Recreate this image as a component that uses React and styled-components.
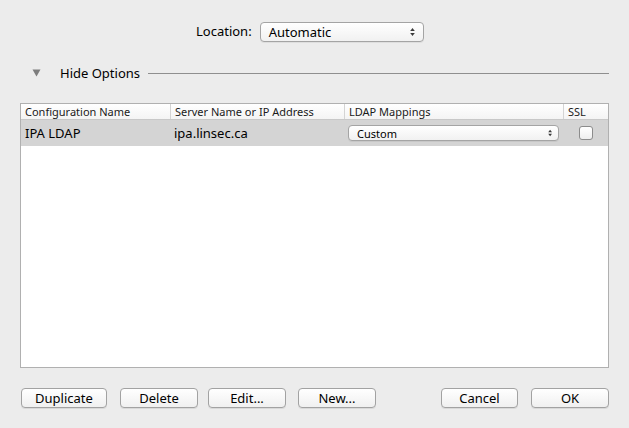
import React from "react";
import styled, { createGlobalStyle } from "styled-components";

const Global = createGlobalStyle`
  html, body { margin: 0; padding: 0; background: #ececec; }
  body { font-family: "Noto Sans", "DejaVu Sans", sans-serif; color: #000; }
`;

const Window = styled.div`
  width: 629px;
  height: 428px;
  background: #ececec;
  box-sizing: border-box;
  padding-top: 21px;
  display: flex;
  flex-direction: column;
`;

const LocationRow = styled.div`
  display: flex;
  align-items: center;
  padding-left: 196px;
  gap: 8px;
  height: 21px;
`;

const Label = styled.span`
  font-size: 13px;
  line-height: 16px;
  margin-top: -2px;
`;

const Popup = styled.div`
  position: relative;
  box-sizing: border-box;
  width: ${p => p.$w}px;
  height: ${p => p.$h}px;
  border: 1px solid #a4a4a4;
  border-radius: 4px;
  background: linear-gradient(#ffffff, #f1f1f1);
  box-shadow: 0 1px 0 rgba(0,0,0,0.06);
  display: flex;
  align-items: center;
  padding-left: ${p => p.$pad}px;
  font-size: ${p => p.$fs}px;
`;

const Arrows = styled.svg`
  position: absolute;
  right: ${p => p.$r}px;
  top: 50%;
  transform: translateY(-50%);
`;

const Disclosure = styled.div`
  display: flex;
  align-items: center;
  margin-top: 21px;
  padding-left: 32px;
  padding-right: 20px;
  height: 20px;
`;

const Tri = styled.svg`
  margin-right: 19px;
`;

const DiscText = styled.span`
  font-size: 13px;
  margin-right: 8px;
`;

const Rule = styled.div`
  flex: 1;
  height: 1px;
  background: #8f8f8f;
`;

const Table = styled.div`
  margin: 20px 20px 0 20px;
  height: 265px;
  box-sizing: border-box;
  border: 1px solid #b0b0b0;
  background: #fff;
  display: flex;
  flex-direction: column;
`;

const cols = "149px 174px 219px 1fr";

const HeaderRow = styled.div`
  display: grid;
  grid-template-columns: ${cols};
  height: 15px;
  border-bottom: 1px solid #c8c8c8;
  background: linear-gradient(#ffffff, #f4f4f4);
`;

const HeadCell = styled.div`
  font-size: 11px;
  line-height: 15px;
  padding-left: 4px;
  color: #1a1a1a;
  border-left: ${p => (p.$first ? "none" : "1px solid #d4d4d4")};
  white-space: nowrap;
  overflow: hidden;
`;

const DataRow = styled.div`
  display: grid;
  grid-template-columns: ${cols};
  height: 26px;
  background: #d4d4d4;
  align-items: center;
`;

const Cell = styled.div`
  font-size: 13px;
  padding-left: ${p => p.$pad}px;
  display: flex;
  align-items: center;
`;

const Check = styled.div`
  width: 14px;
  height: 14px;
  box-sizing: border-box;
  border: 1px solid #8c8c8c;
  border-radius: 3px;
  background: linear-gradient(#ffffff, #eeeeee);
`;

const ButtonRow = styled.div`
  display: flex;
  padding: 0 20px;
  margin-top: 20px;
`;

const Btn = styled.button`
  box-sizing: border-box;
  width: ${p => p.$w}px;
  height: 20px;
  margin-left: ${p => p.$ml}px;
  border: 1px solid #a2a2a2;
  border-radius: 4px;
  background: linear-gradient(#ffffff, #f0f0f0);
  box-shadow: 0 1px 0 rgba(0,0,0,0.08);
  font-family: "Noto Sans", "DejaVu Sans", sans-serif;
  font-size: 13px;
  color: #000;
  padding: 0;
  display: flex;
  align-items: center;
  justify-content: center;
`;

const Spacer = styled.div`
  flex: 1;
`;

const UpDown = ({ r, size = 1 }) => (
  <Arrows $r={r} width={5 * size} height={9 * size} viewBox="0 0 5 9">
    <path d="M0.2 3.6 L2.5 0.6 L4.8 3.6 Z" fill="#3a3a3a" />
    <path d="M0.2 5.4 L2.5 8.4 L4.8 5.4 Z" fill="#3a3a3a" />
  </Arrows>
);

export default function App() {
  return (
    <>
      <Global />
      <Window>
        <LocationRow>
          <Label>Location:</Label>
          <Popup $w={164} $h={20} $pad={8} $fs={13}>
            Automatic
            <UpDown r={8} />
          </Popup>
        </LocationRow>

        <Disclosure>
          <Tri width="9" height="8" viewBox="0 0 9 8">
            <path d="M0.5 0.5 L8.5 0.5 L4.5 7.5 Z" fill="#7d7d7d" />
          </Tri>
          <DiscText>Hide Options</DiscText>
          <Rule />
        </Disclosure>

        <Table>
          <HeaderRow>
            <HeadCell $first>Configuration Name</HeadCell>
            <HeadCell>Server Name or IP Address</HeadCell>
            <HeadCell>LDAP Mappings</HeadCell>
            <HeadCell>SSL</HeadCell>
          </HeaderRow>
          <DataRow>
            <Cell $pad={4}>IPA LDAP</Cell>
            <Cell $pad={4}>ipa.linsec.ca</Cell>
            <Cell $pad={4}>
              <Popup $w={211} $h={16} $pad={8} $fs={11}>
                Custom
                <UpDown r={6} size={0.85} />
              </Popup>
            </Cell>
            <Cell $pad={16}>
              <Check />
            </Cell>
          </DataRow>
        </Table>

        <ButtonRow>
          <Btn $w={86} $ml={1}>Duplicate</Btn>
          <Btn $w={78} $ml={13}>Delete</Btn>
          <Btn $w={78} $ml={10}>Edit...</Btn>
          <Btn $w={78} $ml={12}>New...</Btn>
          <Spacer />
          <Btn $w={77} $ml={0}>Cancel</Btn>
          <Btn $w={78} $ml={13}>OK</Btn>
        </ButtonRow>
      </Window>
    </>
  );
}
